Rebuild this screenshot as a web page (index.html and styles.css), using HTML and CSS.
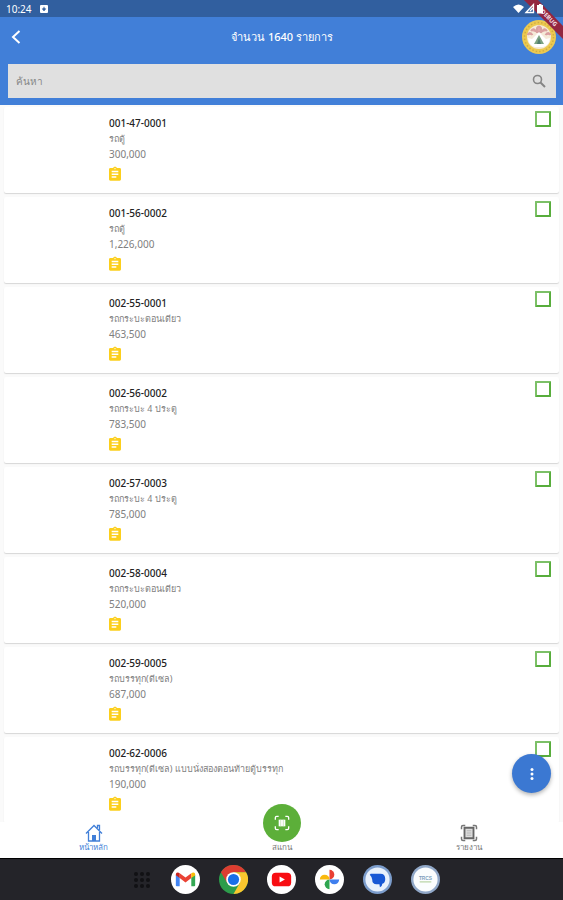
FILE: index.html
```html
<!DOCTYPE html>
<html lang="th">
<head>
  <meta charset="UTF-8">
  <meta name="viewport" content="width=device-width, initial-scale=1">
  <title>จำนวน 1640 รายการ</title>
  <link rel="stylesheet" href="styles.css">
</head>
<body>
  <!-- shared icons -->
  <svg class="defs" aria-hidden="true">
    <symbol id="note" viewBox="0 0 24 24">
      <path fill="#fccf1c" d="M19 3h-4.200C14.400 1.800 13.300 1 12 1s-2.400.8-2.800 2H5c-1.100 0-2 .9-2 2v15c0 1.100.9 2 2 2h14c1.100 0 2-.9 2-2V5c0-1.100-.9-2-2-2z"/>
      <path fill="#fff" d="M7 7h10v2.200H7zM7 11.200h10v2.200H7zM7 15.400h7v2.200H7z"/>
      <circle cx="12" cy="4" r="1" fill="#fff"/>
    </symbol>
    <symbol id="frame" viewBox="0 0 24 24">
      <path fill="none" stroke="currentColor" stroke-width="2" d="M2 7V4q0-2 2-2h3M17 2h3q2 0 2 2v3M22 17v3q0 2-2 2h-3M7 22H4q-2 0-2-2v-3"/>
    </symbol>
  </svg>

  <div class="status-bar">
    <span>10:24</span>
    <svg width="8" height="8" viewBox="0 0 8 8"><rect width="8" height="8" rx="1" fill="#fff"/><path d="M4 1.800v3M2.500 3.800h3L4 5.800z" stroke="#315f9f" fill="#315f9f"/></svg>
    <svg class="signals" width="34" height="12" viewBox="0 0 34 12">
      <path fill="#fff" d="M0 4Q5.500-1 11 4L5.500 10z"/>
      <path fill="none" stroke="#fff" stroke-width="1.300" d="M13 9.500L20.500 1.500v8zM17 8l3-3"/>
      <path fill="#fff" d="M26 1h2.500v1H30v8.500h-6V2h2z"/>
    </svg>
  </div>

  <header class="header">
    <div class="title-row">
      <button class="back" aria-label="ย้อนกลับ">
        <svg width="16" height="16" viewBox="0 0 16 16"><path d="M11.500 2L5 8l6.500 6" fill="none" stroke="#fff" stroke-width="2"/></svg>
      </button>
      <h1>จำนวน 1640 รายการ</h1>
      <svg class="emblem" width="34" height="34" viewBox="0 0 34 34">
        <circle cx="17" cy="17" r="17" fill="#ecc950"/>
        <circle cx="17" cy="17" r="14.500" fill="none" stroke="#cfab45" stroke-width="1.500" stroke-dasharray="1.500 2"/>
        <circle cx="17" cy="17" r="12" fill="#f5ead8"/>
        <path d="M5.500 15q2-4 5 0M9 11q3-4 5 1M15 8q2-3 4 0v4h-4zM20 12q2-5 5-1M23.500 15q3-4 5 0" fill="#e3a5a7" stroke="#d9a0a0" stroke-width="2"/>
        <path d="M6 18l4 1 7-7 7 7 4-1q-1 8-7 9H13q-6-1-7-9z" fill="#fff"/>
        <path d="M17 15l5 9H12z" fill="#7da382"/>
        <path d="M17 18l2 6h-4z" fill="#517e70"/>
      </svg>
    </div>
    <form class="search">
      <input type="text" placeholder="ค้นหา" aria-label="ค้นหา">
      <button type="button" aria-label="ค้นหา">
        <svg width="14" height="14" viewBox="0 0 14 14" fill="none" stroke="#858585"><circle cx="5.500" cy="5.500" r="4" stroke-width="1.600"/><path d="M8.500 8.500l4.500 4.500" stroke-width="2"/></svg>
      </button>
    </form>
  </header>

  <main class="list">
    <article class="card">
      <div class="info">
        <h2>001-47-0001</h2>
        <p class="desc">รถตู้</p>
        <p>300,000</p>
        <svg class="note"><use href="#note"/></svg>
      </div>
      <input type="checkbox" aria-label="001-47-0001">
    </article>
    <article class="card">
      <div class="info">
        <h2>001-56-0002</h2>
        <p class="desc">รถตู้</p>
        <p>1,226,000</p>
        <svg class="note"><use href="#note"/></svg>
      </div>
      <input type="checkbox" aria-label="001-56-0002">
    </article>
    <article class="card">
      <div class="info">
        <h2>002-55-0001</h2>
        <p class="desc">รถกระบะตอนเดียว</p>
        <p>463,500</p>
        <svg class="note"><use href="#note"/></svg>
      </div>
      <input type="checkbox" aria-label="002-55-0001">
    </article>
    <article class="card">
      <div class="info">
        <h2>002-56-0002</h2>
        <p class="desc">รถกระบะ 4 ประตู</p>
        <p>783,500</p>
        <svg class="note"><use href="#note"/></svg>
      </div>
      <input type="checkbox" aria-label="002-56-0002">
    </article>
    <article class="card">
      <div class="info">
        <h2>002-57-0003</h2>
        <p class="desc">รถกระบะ 4 ประตู</p>
        <p>785,000</p>
        <svg class="note"><use href="#note"/></svg>
      </div>
      <input type="checkbox" aria-label="002-57-0003">
    </article>
    <article class="card">
      <div class="info">
        <h2>002-58-0004</h2>
        <p class="desc">รถกระบะตอนเดียว</p>
        <p>520,000</p>
        <svg class="note"><use href="#note"/></svg>
      </div>
      <input type="checkbox" aria-label="002-58-0004">
    </article>
    <article class="card">
      <div class="info">
        <h2>002-59-0005</h2>
        <p class="desc">รถบรรทุก(ดีเซล)</p>
        <p>687,000</p>
        <svg class="note"><use href="#note"/></svg>
      </div>
      <input type="checkbox" aria-label="002-59-0005">
    </article>
    <article class="card">
      <div class="info">
        <h2>002-62-0006</h2>
        <p class="desc">รถบรรทุก(ดีเซล) แบบนั่งสองตอนท้ายตู้บรรทุก</p>
        <p>190,000</p>
        <svg class="note"><use href="#note"/></svg>
      </div>
      <input type="checkbox" aria-label="002-62-0006">
    </article>
  </main>

  <nav class="tabs">
    <a class="tab active" href="#">
      <svg width="18" height="18" viewBox="0 0 18 18"><path d="M1 9.500L9 1.500l8 8M3.500 8v9h11V8M12.500 4V1.500h2V6" fill="none" stroke="currentColor" stroke-width="1.300"/><path d="M7 17v-6h4v6z" fill="currentColor"/></svg>
      <span>หน้าหลัก</span>
    </a>
    <a class="tab scan" href="#">
      <span class="scan-circle">
        <svg width="16" height="16" viewBox="0 0 24 24"><use href="#frame"/><path fill="#fff" d="M7 7h10v10H7z"/><path d="M10 7v10M14 7v10" stroke="#b5dfa6"/></svg>
      </span>
      <span>สแกน</span>
    </a>
    <a class="tab" href="#">
      <svg width="18" height="18" viewBox="0 0 24 24"><use href="#frame"/><path fill="#ddd" stroke="#666" stroke-width="2.500" d="M6 5h12v14H6z"/><path d="M9 9h6M9 12h6M9 15h6" stroke="#aaa"/></svg>
      <span>รายงาน</span>
    </a>
  </nav>

  <footer class="taskbar">
    <button aria-label="Apps">
      <svg width="20" height="20" viewBox="0 0 20 20" fill="#111114"><circle cx="4" cy="4" r="2"/><circle cx="10" cy="4" r="2"/><circle cx="16" cy="4" r="2"/><circle cx="4" cy="10" r="2"/><circle cx="10" cy="10" r="2"/><circle cx="16" cy="10" r="2"/><circle cx="4" cy="16" r="2"/><circle cx="10" cy="16" r="2"/><circle cx="16" cy="16" r="2"/></svg>
    </button>
    <button aria-label="Gmail">
      <svg width="29" height="29" viewBox="0 0 30 30"><circle cx="15" cy="15" r="15" fill="#fff"/><path d="M5 10l4 3v9H6q-1 0-1-1z" fill="#4285f4"/><path d="M25 10l-4 3v9h3q1 0 1-1z" fill="#34a853"/><path d="M9 8.500l6 4.500 6-4.500v5L15 18l-6-4.500z" fill="#ea4335"/><path d="M5 10q0-3 3-2l1 .5v5l-4-3z" fill="#c5221f"/><path d="M25 10q0-3-3-2l-1 .5v5l4-3z" fill="#fbbc04"/></svg>
    </button>
    <button aria-label="Chrome">
      <svg width="29" height="29" viewBox="0 0 30 30"><circle cx="15" cy="15" r="15" fill="#2d9c4b"/><path d="M2 7.500A15 15 0 0 1 28 7.500H15L8.500 18.700z" fill="#dc3d31"/><path d="M28 7.500A15 15 0 0 1 15 30l6.500-11.300L15 7.500z" fill="#fbc72e"/><circle cx="15" cy="15" r="7.500" fill="#fff"/><circle cx="15" cy="15" r="5.800" fill="#1a6fe8"/></svg>
    </button>
    <button aria-label="YouTube">
      <svg width="29" height="29" viewBox="0 0 30 30"><circle cx="15" cy="15" r="15" fill="#fff"/><rect x="5" y="8" width="20" height="14" rx="4" fill="#f80d12"/><path d="M13 12l5.500 3-5.500 3z" fill="#fff"/></svg>
    </button>
    <button aria-label="Photos">
      <svg width="29" height="29" viewBox="0 0 30 30"><circle cx="15" cy="15" r="15" fill="#fff"/><path d="M15 5a5 5 0 0 1 0 10z" fill="#e93f33"/><path d="M25 15a5 5 0 0 1-10 0z" fill="#3f7fee"/><path d="M15 25a5 5 0 0 1 0-10z" fill="#2fa650"/><path d="M5 15a5 5 0 0 1 10 0z" fill="#fab90e"/></svg>
    </button>
    <button aria-label="Messages">
      <svg width="29" height="29" viewBox="0 0 30 30"><circle cx="15" cy="15" r="15" fill="#7c9dcc"/><circle cx="15" cy="15" r="12.500" fill="#e9f1fc"/><path d="M8 9h10q5 0 5 5.500 0 4-3 5 0 2.500-2.500 3.500L17 20h-3q-4.500 0-4.500-5 0-2.500-2.500-5z" fill="#1858d5"/></svg>
    </button>
    <button aria-label="TRCS">
      <svg width="29" height="29" viewBox="0 0 30 30"><circle cx="15" cy="15" r="15" fill="#91a8c8"/><circle cx="15" cy="15" r="12.500" fill="#fbfdfe"/><text x="15" y="16" text-anchor="middle" font-size="5" font-weight="700" fill="#7e9fbd">TRCS</text><path d="M9 17.500h12" stroke="#a9c98f"/></svg>
    </button>
  </footer>

  <button class="fab" aria-label="เมนู">
    <svg width="4" height="12" viewBox="0 0 4 12" fill="#fff"><circle cx="2" cy="1.600" r="1.500"/><circle cx="2" cy="6" r="1.500"/><circle cx="2" cy="10.400" r="1.500"/></svg>
  </button>

  <svg class="ribbon" width="40" height="40" viewBox="0 0 40 40">
    <path d="M1 0h14l25 26v13z" fill="#932640"/>
    <text x="26" y="20" transform="rotate(45 26 18)" text-anchor="middle" font-size="6" font-weight="700" fill="#f3dfe4">DEBUG</text>
  </svg>
</body>
</html>
```

FILE: styles.css
```css
* {
  box-sizing: border-box;
}

body {
  margin: 0;
  height: 100vh;
  display: flex;
  flex-direction: column;
  position: relative;
  overflow: hidden;
  background: #fff;
  font-family: "Noto Sans", "Open Sans", sans-serif;
  font-size: 10px;
}

button {
  padding: 0;
  border: 0;
  background: none;
  display: flex;
  align-items: center;
  justify-content: center;
}

.defs {
  position: absolute;
  width: 0;
  height: 0;
}

.status-bar {
  height: 17px;
  padding: 0 16px 0 6px;
  display: flex;
  align-items: center;
  gap: 8px;
  background: #315f9f;
  color: #fff;
}

/* stays above the debug ribbon */
.signals {
  margin-left: auto;
  position: relative;
  z-index: 2;
}

/* header */
.header {
  padding: 1px 7px 7px 8px;
  background: #417fd8;
}

.title-row {
  height: 38px;
  display: flex;
  align-items: center;
  justify-content: space-between;
}

.title-row h1 {
  margin: 0;
  font-size: 11px;
  font-weight: 500;
  color: #fff;
}

.back {
  width: 34px;
  height: 34px;
  justify-content: flex-start;
}

.search {
  margin-top: 8px;
  height: 34px;
  padding: 0 10px 0 8px;
  display: flex;
  align-items: center;
  background: #e0e0e0;
}

.search input {
  flex: 1;
  min-width: 0;
  padding: 0;
  border: 0;
  outline: 0;
  background: none;
  font: inherit;
  font-size: 10px;
}

.search input::placeholder {
  color: #858585;
}

/* items */
.list {
  flex: 1;
  min-height: 0;
  overflow: hidden;
  padding: 2px 4px 0;
  background: #fafafa;
}

.card {
  display: flex;
  justify-content: space-between;
  align-items: flex-start;
  margin-bottom: 4px;
  padding: 8px 8px 11px 105px;
  border-radius: 2px;
  background: #fff;
  box-shadow: 0 1px 1px rgba(0, 0, 0, 0.14);
}

.info h2,
.info p {
  margin: 0;
  font-size: 10px;
  line-height: 16px;
  font-weight: 400;
  color: #808080;
}

.info h2 {
  font-weight: 500;
  color: #222;
}

.info .desc {
  font-size: 9px;
  line-height: 15px;
}

.note {
  display: block;
  width: 16px;
  height: 16px;
  margin: 4px 0 0 -2px;
}

.card input {
  appearance: none;
  width: 16px;
  height: 16px;
  margin: -4px 0 0;
  border: 2px solid #58ad3c;
  border-top-color: #7cc067;
  border-left-color: #7cc067;
  border-radius: 1px;
}

/* bottom tabs */
.tabs {
  height: 36px;
  display: flex;
  background: #fff;
}

.tab {
  flex: 1;
  display: flex;
  flex-direction: column;
  align-items: center;
  justify-content: flex-end;
  padding-bottom: 6px;
  color: #777;
  font-size: 8px;
  line-height: 10px;
  text-decoration: none;
}

.tab.active {
  color: #417fd8;
}

.scan-circle {
  width: 38px;
  height: 38px;
  flex: none;
  display: flex;
  align-items: center;
  justify-content: center;
  border-radius: 50%;
  background: #5caf39;
  color: #fff;
  position: relative;
}

.taskbar {
  height: 42px;
  padding-left: 9px;
  display: flex;
  align-items: center;
  justify-content: center;
  gap: 19px;
  background: #242429;
  border-top: 1px solid #000;
}

.fab {
  position: absolute;
  right: 12px;
  bottom: 107px;
  width: 39px;
  height: 39px;
  border-radius: 50%;
  background: #3b78d2;
  box-shadow: 0 2px 4px rgba(0, 0, 0, 0.3);
}

.ribbon {
  position: absolute;
  top: 0;
  right: 0;
}
```
